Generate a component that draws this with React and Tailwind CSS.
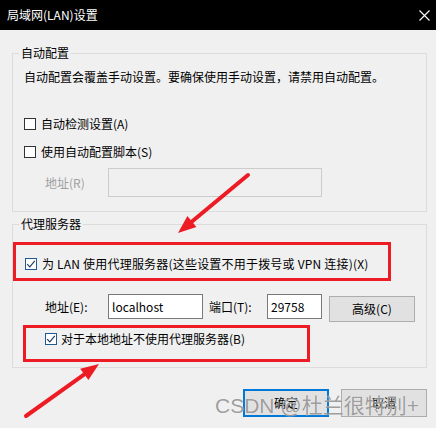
import React from "react";

function Box({ checked }) {
  return (
    <span
      className={
        "inline-flex w-[12px] h-[12px] shrink-0 items-center justify-center bg-white border " +
        (checked ? "border-[#1f5a92]" : "border-[#333333]")
      }
    >
      {checked && (
        <svg width="10" height="10" viewBox="0 0 10 10">
          <path d="M1.2 5.2 L3.8 7.8 L8.8 1.8" fill="none" stroke="#1f3f66" strokeWidth="1.2" />
        </svg>
      )}
    </span>
  );
}

export default function App() {
  return (
    <div className="relative w-[436px] h-[428px] overflow-hidden bg-[#f0f0f0] text-[12px] leading-[16px] text-black font-['Noto_Sans_CJK_SC','Microsoft_YaHei',sans-serif]">
      {/* Title bar */}
      <div className="h-[30px] bg-black text-white flex items-center justify-between pl-[7px] pr-[6px]">
        <span className="leading-[16px]">局域网(LAN)设置</span>
        <svg width="11" height="11" viewBox="0 0 11 11">
          <path d="M0.5 0.5 L10.5 10.5 M10.5 0.5 L0.5 10.5" stroke="white" strokeWidth="1.1" />
        </svg>
      </div>

      <div className="pl-[12px] pr-[9px]">
        {/* Group 1 */}
        <fieldset className="mt-[15px] border border-[#dcdcdc] pb-[14px]">
          <legend className="ml-[6px] px-[2px] leading-[16px]">自动配置</legend>
          <div className="mt-[8px] pl-[11px]">自动配置会覆盖手动设置。要确保使用手动设置，请禁用自动配置。</div>
          <div className="mt-[31px] pl-[11px] flex items-center gap-[5px] h-[16px]">
            <Box />
            <span>自动检测设置(A)</span>
          </div>
          <div className="mt-[12px] pl-[11px] flex items-center gap-[5px] h-[16px]">
            <Box />
            <span>使用自动配置脚本(S)</span>
          </div>
          <div className="mt-[8px] pl-[32px] flex items-center">
            <span className="w-[63px] text-[#a0a0a0]">地址(R)</span>
            <div className="w-[214px] h-[29px] border border-[#cccccc] bg-[#f0f0f0]" />
          </div>
        </fieldset>

        {/* Group 2 */}
        <fieldset className="mt-[4px] border border-[#dcdcdc] pb-[5px]">
          <legend className="ml-[6px] px-[2px] leading-[16px]">代理服务器</legend>
          <div className="mt-[10px] w-[378px] h-[39px] border-[3px] border-[#ed1c24] pl-[9px] pt-[4px] flex items-center gap-[5px]">
            <Box checked />
            <span className="tracking-[0.2px]">为 LAN 使用代理服务器(这些设置不用于拨号或 VPN 连接)(X)</span>
          </div>
          <div className="mt-[13px] pl-[32px] flex items-start">
            <span className="w-[63px] h-[25px] leading-[25px]">地址(E):</span>
            <div className="w-[95px] h-[25px] border border-[#7a7a7a] bg-white pl-[3px] leading-[23px]">localhost</div>
            <span className="ml-[6px] w-[58px] h-[25px] leading-[25px]">端口(T):</span>
            <div className="w-[55px] h-[25px] border border-[#7a7a7a] bg-white pl-[3px] leading-[23px]">29758</div>
            <div className="ml-[7px] mt-[2px] w-[86px] h-[26px] border border-[#adadad] bg-[#e1e1e1] flex items-center justify-center">高级(C)</div>
          </div>
          <div className="mt-[3px] ml-[10px] w-[287px] h-[37px] border-[3px] border-[#ed1c24] pl-[19px] pt-[3px]">
            <div className="flex items-center gap-[4px] h-[16px]">
              <Box checked />
              <span>对于本地地址不使用代理服务器(B)</span>
            </div>
          </div>
        </fieldset>

        <div className="mt-[21px] flex justify-end gap-[12px]">
          <div className="w-[86px] h-[28px] border-2 border-[#0078d7] bg-[#e1e1e1] flex items-center justify-center">确定</div>
          <div className="w-[86px] h-[28px] border border-[#adadad] bg-[#e1e1e1] flex items-center justify-center">取消</div>
        </div>
      </div>

      {/* Annotation arrows */}
      <svg className="absolute inset-0 pointer-events-none" width="436" height="428" viewBox="0 0 436 428">
        <line x1="248" y1="175" x2="192" y2="221.5" stroke="#ed1c24" strokeWidth="4" strokeLinecap="round" />
        <polygon points="178,233 196.4,226.9 187.4,216.1" fill="#ed1c24" />
        <line x1="26" y1="416" x2="84.3" y2="374.4" stroke="#ed1c24" strokeWidth="4" strokeLinecap="round" />
        <polygon points="99,364 88.4,380.1 80.2,368.7" fill="#ed1c24" />
      </svg>

      {/* Watermark */}
      <div className="absolute left-[215px] top-[393px] pointer-events-none whitespace-nowrap text-[21px] leading-[26px] text-[rgba(95,95,95,0.62)] [text-shadow:0_0_1px_rgba(255,255,255,0.9)] font-['Liberation_Sans','Noto_Sans_CJK_SC',sans-serif]">
        CSDN @杜兰很特别+
      </div>
    </div>
  );
}
